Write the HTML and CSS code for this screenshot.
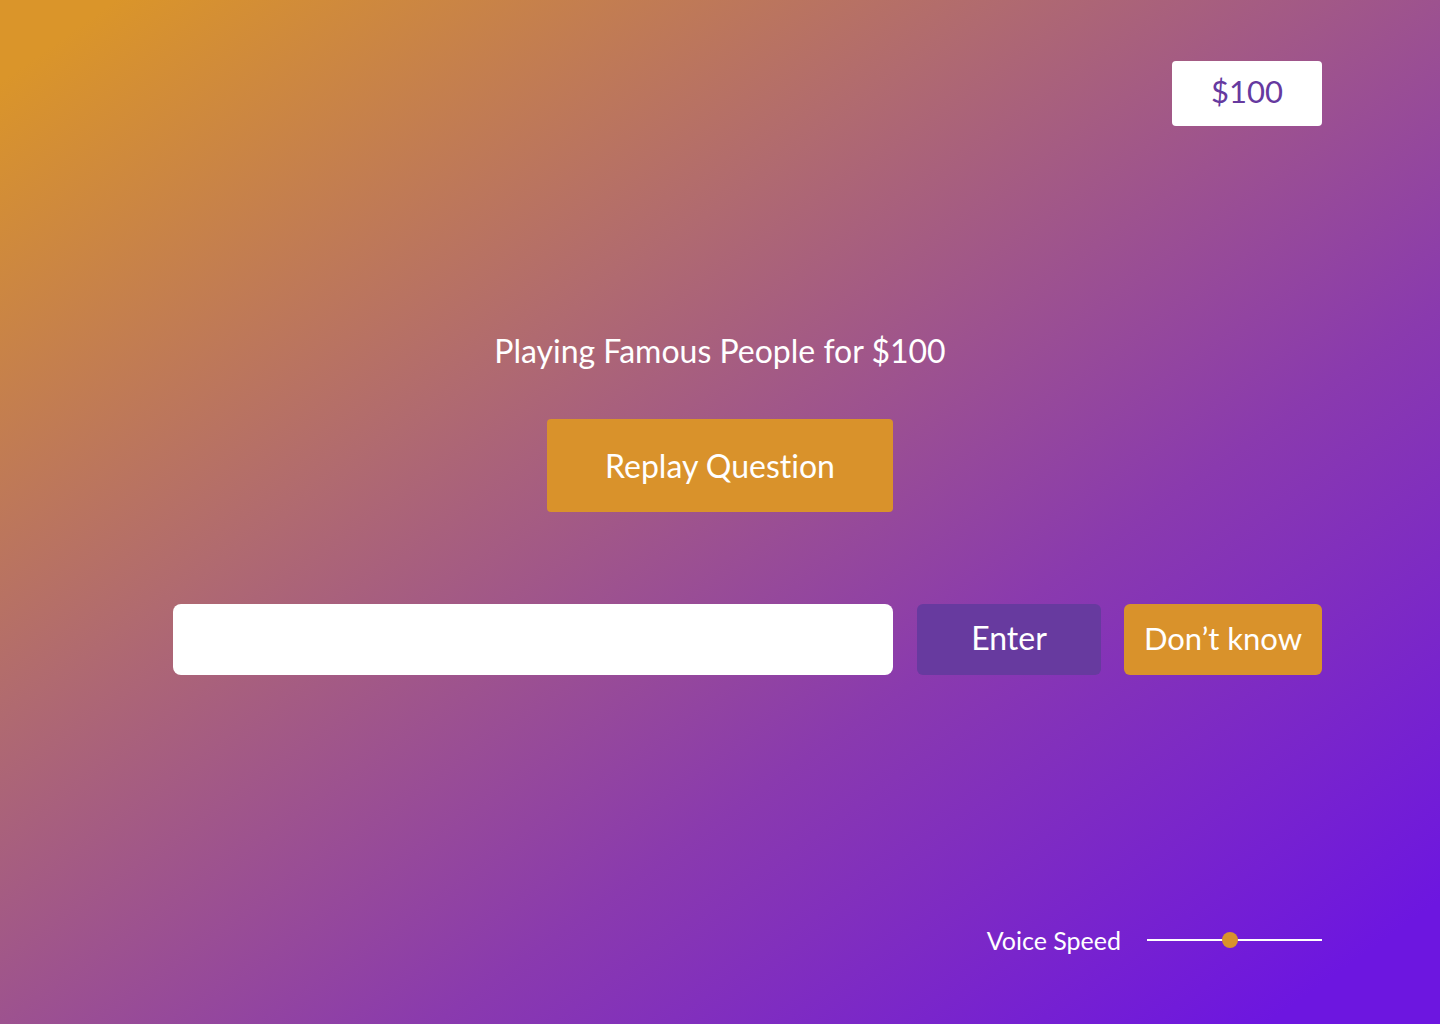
FILE: index.html
```html
<!DOCTYPE html>
<html lang="en">
<head>
<meta charset="utf-8">
<title>Famous People</title>
<link rel="stylesheet" href="styles.css">
</head>
<body>
<main class="page">
  <header class="topbar">
    <div class="score">$100</div>
  </header>
  <section class="center">
    <h1 class="title">Playing Famous People for $100</h1>
    <button class="btn btn-orange replay">Replay Question</button>
  </section>
  <form class="answer-row" onsubmit="return false">
    <input class="answer" type="text" aria-label="Answer">
    <button class="btn btn-purple enter">Enter</button>
    <button class="btn btn-orange dontknow">Don’t know</button>
  </form>
  <footer class="voice">
    <span class="voice-label">Voice Speed</span>
    <div class="slider"><span class="track"></span><span class="thumb"></span></div>
  </footer>
</main>
</body>
</html>
```
FILE: styles.css
```css
html, body { margin: 0; height: 100%; }
body {
  font-family: Lato, "Open Sans", sans-serif;
  font-variant-ligatures: none;
  background: linear-gradient(to bottom right, #da952a 4%, #b06a70 35%, #8a3aae 65%, #6d16e0 94%);
  color: #fff;
  overflow: hidden;
}
.page {
  width: 1440px;
  height: 1024px;
  box-sizing: border-box;
  padding: 61px 118px 0 173px;
  display: flex;
  flex-direction: column;
}
.topbar { display: flex; justify-content: flex-end; }
.score {
  width: 150px; height: 65px; box-sizing: border-box;
  background: #fff; border-radius: 4px;
  color: #663a9f;
  font-size: 31px;
  padding-bottom: 5px;
  display: flex; align-items: center; justify-content: center;
}
.center {
  display: flex; flex-direction: column; align-items: center;
  margin-left: -173px; margin-right: -118px;
  margin-top: 205px;
}
.title {
  margin: 0; font-weight: 400; font-size: 32px; line-height: 40px;
}
.btn {
  border: 0; color: #fff; font-family: inherit; font-size: 32px;
  font-variant-ligatures: none;
  border-radius: 4px; cursor: pointer; padding: 0;
}
.btn-orange { background: #d9922b; }
.btn-purple { background: #673a9f; }
.replay { width: 346px; height: 93px; margin-top: 48px; padding-bottom: 0; }
.answer-row {
  display: flex; gap: 24px; margin: 92px 0 0;
}
.answer {
  width: 720px; height: 71px; box-sizing: border-box;
  border: 0; border-radius: 8px; background: #fff;
  font-family: inherit; font-size: 28px; padding: 0 20px;
}
.enter { width: 184px; height: 71px; border-radius: 6px; padding-bottom: 4px; }
.dontknow { width: 198px; height: 71px; border-radius: 6px; margin-left: -1px; padding-bottom: 4px; font-size: 31px; }
.voice {
  margin-top: auto; margin-bottom: 76px;
  display: flex; justify-content: flex-end; align-items: center; gap: 26px;
  margin-bottom: 69px;
}
.voice-label { font-size: 25px; }
.slider { position: relative; width: 175px; height: 16px; }
.track { position: absolute; left: 0; right: 0; top: 7px; height: 2px; background: #fff; }
.thumb {
  position: absolute; left: 75px; top: 0; width: 16px; height: 16px;
  border-radius: 50%; background: #d9922b;
}
```
